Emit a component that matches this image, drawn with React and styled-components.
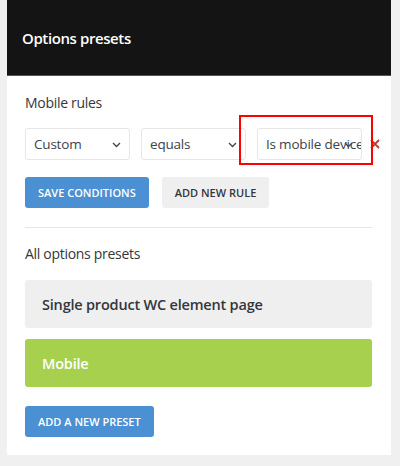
import styled, { createGlobalStyle } from 'styled-components'

const GlobalStyle = createGlobalStyle`
  body {
    margin: 0;
    background: #f0f0f0;
    font-family: 'Open Sans', 'Noto Sans', sans-serif;
    color: #32373c;
  }
`

const Panel = styled.div`
  width: 384px;
  margin-left: 7px;
  background: #fff;
`
const Header = styled.div`
  height: 76px;
  box-sizing: border-box;
  display: flex;
  align-items: center;
  padding-left: 15px;
  background: #141414;
  border-bottom: 1px solid #555;
`
const Title = styled.h1`
  margin: 0;
  font-size: 15px;
  font-weight: 600;
  letter-spacing: -0.4px;
  color: #fff;
`
const Body = styled.div`
  padding: 17px 19px 18px 18px;
`
const Label = styled.div`
  font-size: 14px;
  line-height: 20px;
  letter-spacing: -0.3px;
`
const RuleRow = styled.div`
  display: flex;
  align-items: center;
  gap: 8px;
  margin-top: 15px;
`
const SelectGroup = styled.div`
  display: flex;
  gap: 11px;
`
const Select = styled.div`
  position: relative;
  width: 105px;
  height: 32px;
  box-sizing: border-box;
  display: flex;
  align-items: center;
  padding: 0 4px 0 8px;
  border: 1px solid #e6e6e6;
  border-radius: 3px;
  font-size: 13.5px;
  letter-spacing: -0.2px;
  color: #3c434a;
  white-space: nowrap;
  overflow: hidden;

  svg {
    position: absolute;
    right: 8px;
    top: 13px;
  }
`
const Highlighted = styled.div`
  position: relative;

  &::after {
    content: '';
    position: absolute;
    left: -18px;
    right: -11px;
    top: -13px;
    bottom: -5px;
    border: 2px solid #f00;
    pointer-events: none;
  }
`
const Remove = styled.span`
  display: flex;
`
const ButtonRow = styled.div`
  display: flex;
  gap: 13px;
  margin-top: 17px;
`
const Button = styled.button`
  height: 31px;
  padding: 0 13px;
  border: none;
  border-radius: 3px;
  font-family: inherit;
  font-size: 11px;
  font-weight: 600;
  text-transform: uppercase;
  background: ${(p) => (p.$primary ? '#4a90d2' : '#efefef')};
  color: ${(p) => (p.$primary ? '#fff' : '#32373c')};
`
const Divider = styled.hr`
  margin: 19px 0 16px;
  border: none;
  border-top: 1px solid #e6e6e6;
`
const PresetList = styled.div`
  display: flex;
  flex-direction: column;
  gap: 11px;
  margin: 16px 0 19px;
`
const Preset = styled.div`
  height: 48px;
  display: flex;
  align-items: center;
  padding-left: 17px;
  border-radius: 3px;
  font-size: 14.5px;
  font-weight: 600;
  letter-spacing: -0.2px;
  background: ${(p) => (p.$active ? '#a6d04e' : '#efefef')};
  color: ${(p) => (p.$active ? '#fff' : '#32373c')};
`

const Chevron = () => (
  <svg width="9" height="6" viewBox="0 0 9 6" fill="none">
    <path d="M1 1l3.5 3.5L8 1" stroke="#3c434a" strokeWidth="1.3" />
  </svg>
)

export default function App() {
  return (
    <>
      <GlobalStyle />
      <Panel>
        <Header>
          <Title>Options presets</Title>
        </Header>
        <Body>
          <Label>Mobile rules</Label>
          <RuleRow>
            <SelectGroup>
              <Select>
                Custom
                <Chevron />
              </Select>
              <Select>
                equals
                <Chevron />
              </Select>
              <Highlighted>
                <Select>
                  Is mobile device
                  <Chevron />
                </Select>
              </Highlighted>
            </SelectGroup>
            <Remove>
              <svg width="10" height="10" viewBox="0 0 10 10">
                <path d="M1 1l8 8M9 1l-8 8" stroke="#c0392b" strokeWidth="1.8" />
              </svg>
            </Remove>
          </RuleRow>
          <ButtonRow>
            <Button $primary>Save conditions</Button>
            <Button>Add new rule</Button>
          </ButtonRow>
          <Divider />
          <Label>All options presets</Label>
          <PresetList>
            <Preset>Single product WC element page</Preset>
            <Preset $active>Mobile</Preset>
          </PresetList>
          <Button $primary>Add a new preset</Button>
        </Body>
      </Panel>
    </>
  )
}
